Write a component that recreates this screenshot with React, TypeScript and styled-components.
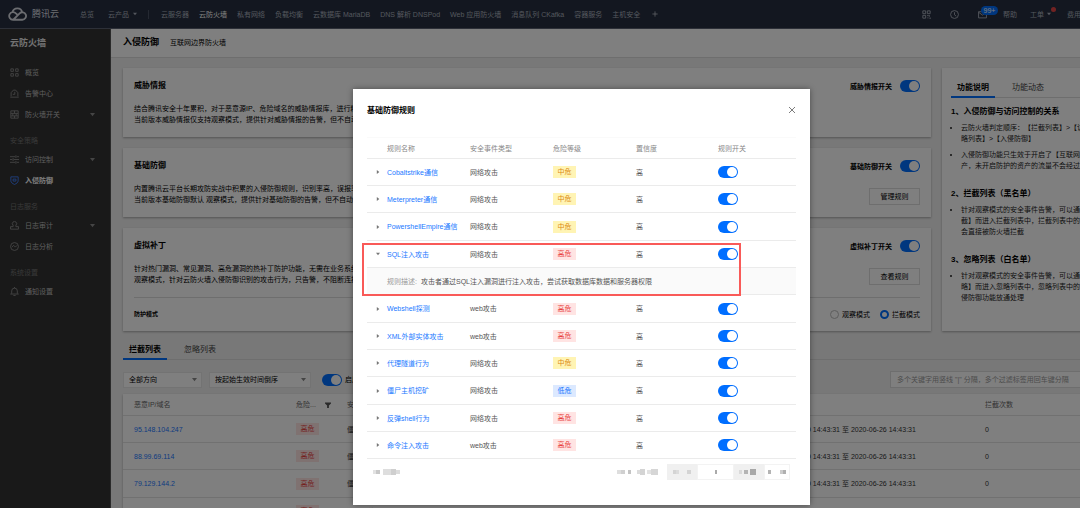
import React from "react";
import styled, { createGlobalStyle, css } from "styled-components";

const Global = createGlobalStyle`
  *, *::before, *::after { box-sizing: border-box; }
  html, body { margin: 0; height: 100%; overflow: hidden; }
  body {
    font-family: "Liberation Sans", "Noto Sans CJK SC", sans-serif;
    font-size: 7px;
    line-height: 11px;
    text-spacing-trim: space-all;
    color: #000;
    background: #f0f0f0;
  }
  button, input, select { font: inherit; color: inherit; margin: 0; padding: 0; }
  h1, h2, h3, p, ul { margin: 0; padding: 0; font-weight: normal; }
  a { color: inherit; text-decoration: none; }
  svg { display: block; flex: none; }
`;

const Viewport = styled.div`
  height: 100vh;
  overflow: hidden;
`;

const Page = styled.div`
  position: relative;
  min-width: 1163px;
  min-height: 100vh;
  display: flex;
  flex-direction: column;
`;

/* ---------- top bar ---------- */

const TopBar = styled.header`
  display: flex;
  align-items: center;
  height: 29px;
  padding-left: 8px;
  background: #262f40;
  border-bottom: 1px solid #5b6070;
  color: #a9afbc;
  white-space: nowrap;
`;

const Brand = styled.a`
  display: flex;
  align-items: center;
  gap: 5px;
  width: 72px;
  font-size: 9px;
  color: #d8dbe2;
`;

const TopNav = styled.nav`
  display: flex;
  align-items: center;
  gap: 10px;
`;

const TopLink = styled.a<{ $active?: boolean }>`
  display: flex;
  align-items: center;
  gap: 4px;
  color: ${(p) => (p.$active ? "#fff" : "inherit")};
`;

const Entry = styled.div`
  display: flex;
  align-items: center;
  gap: 14px;
  width: 68px;
`;

const Divider = styled.span`
  width: 1px;
  height: 9px;
  margin-right: 12px;
  background: #4b5364;
`;

const AddButton = styled.button`
  border: 0;
  background: none;
  margin-left: 2px;
  color: #c0c4cd;
`;

const Tools = styled.div`
  display: flex;
  align-items: center;
  width: 241px;
  margin-left: auto;
`;

const Tool = styled.a<{ $w: number }>`
  position: relative;
  display: flex;
  align-items: center;
  gap: 3px;
  width: ${(p) => p.$w}px;
`;

const Count = styled.span`
  position: absolute;
  left: 3px;
  top: -4px;
  width: 17px;
  border-radius: 5px;
  background: #006eff;
  color: #fff;
  line-height: 9px;
  text-align: center;
`;

const Dot = styled.span`
  position: absolute;
  left: 21px;
  top: -2px;
  width: 5px;
  height: 5px;
  border-radius: 50%;
  background: #e54545;
`;

/* ---------- side bar ---------- */

const Body = styled.div`
  flex: 1;
  display: flex;
`;

const Side = styled.aside`
  flex: none;
  width: 111px;
  padding-left: 10px;
  background: #333;
  border-right: 1px solid #555;
  color: #bcbcbc;
`;

const SideTitle = styled.h2`
  margin: 4px 0 9px;
  font-size: 9px;
  line-height: 20px;
  font-weight: bold;
  color: #e4e4e4;
`;

const SideGroup = styled.h3`
  padding-top: 7px;
  line-height: 17px;
  font-size: 7px;
  color: #747474;
`;

const SideItem = styled.a<{ $active?: boolean }>`
  display: flex;
  align-items: center;
  gap: 6px;
  height: 21px;
  padding-right: 15px;
  color: ${(p) => (p.$active ? "#fff" : "inherit")};
  font-weight: ${(p) => (p.$active ? "bold" : "normal")};
  & > svg { color: ${(p) => (p.$active ? "#3d7eff" : "#8a8a8a")}; }
  & > span { flex: 1; }
`;

/* ---------- content ---------- */

const Main = styled.main`
  flex: 1;
  min-width: 0;
`;

const TitleBar = styled.div`
  display: flex;
  align-items: center;
  gap: 11px;
  height: 29px;
  padding: 0 12px 2px;
  background: #fff;
  border-bottom: 1px solid #ddd;
`;

const PageTitle = styled.h1`
  font-size: 9px;
  font-weight: bold;
`;

const Content = styled.div`
  padding: 10px 12px;
`;

const Columns = styled.div`
  display: grid;
  grid-template-columns: 1fr 209px;
  gap: 11px;
`;

const CardStack = styled.div`
  display: flex;
  flex-direction: column;
  gap: 11px;
`;

const panel = css`
  background: #fff;
  box-shadow: 0 1px 2px rgba(0, 0, 0, 0.3);
`;

const Card = styled.section`
  ${panel}
  padding: 12px 11px;
`;

const ModeCard = styled(Card)`
  padding-bottom: 0;
`;

const CardRow = styled.div`
  display: flex;
  justify-content: space-between;
  white-space: nowrap;
`;

const CardTitle = styled.h2`
  margin-bottom: 11px;
  font-size: 8px;
  line-height: 12px;
  font-weight: bold;
`;

const CardActions = styled.div`
  display: flex;
  flex-direction: column;
  align-items: flex-end;
  gap: 16px;
`;

const SwitchLabel = styled.label`
  display: flex;
  align-items: center;
  gap: 8px;
  font-weight: bold;
`;

const Switch = styled.input.attrs({ type: "checkbox" })`
  appearance: none;
  display: flex;
  justify-content: flex-start;
  align-items: center;
  flex: none;
  width: 20px;
  height: 12px;
  padding: 1px;
  border-radius: 6px;
  background: #bbb;
  &::before {
    content: "";
    width: 10px;
    height: 10px;
    border-radius: 50%;
    background: #fff;
  }
  &:checked {
    justify-content: flex-end;
    background: #006eff;
  }
`;

const PlainButton = styled.button`
  width: 51px;
  height: 17px;
  border: 1px solid #ddd;
  background: #fff;
`;

const ModeRow = styled.div`
  display: flex;
  align-items: center;
  justify-content: space-between;
  height: 34px;
  margin-top: 12px;
  border-top: 1px solid #ddd;
`;

const ModeLabel = styled.strong`
  font-size: 6px;
`;

const RadioGroup = styled.div`
  display: flex;
  gap: 10px;
`;

const RadioLabel = styled.label`
  display: flex;
  align-items: center;
  gap: 3px;
`;

const Radio = styled.input.attrs({ type: "radio" })`
  appearance: none;
  width: 9px;
  height: 9px;
  border: 1px solid #bbb;
  border-radius: 50%;
  background: #fff;
  &:checked { border: 2px solid #006eff; }
`;

const Tabs = styled.div`
  display: flex;
  gap: 11px;
  box-shadow: inset 0 -1px #ddd;
`;

const Tab = styled.button<{ $active?: boolean }>`
  padding: 1px 6px 2px;
  border: 0;
  border-bottom: 2px solid ${(p) => (p.$active ? "#006eff" : "transparent")};
  background: none;
  font-size: 8px;
  line-height: 12px;
  font-weight: ${(p) => (p.$active ? "bold" : "normal")};
  color: ${(p) => (p.$active ? "#000" : "#444")};
`;

const Guide = styled.aside`
  ${panel}
  padding: 13px 0 0 9px;
  overflow: hidden;
`;

const GuideTitle = styled.h3`
  margin: 17px 0 4px;
  font-size: 8px;
  line-height: 12px;
  font-weight: bold;
  ${Tabs} + & { margin-top: 8px; }
`;

const GuideList = styled.ul`
  display: flex;
  flex-direction: column;
  gap: 5px;
  padding-left: 10px;
  color: #222;
  white-space: pre;
`;

const ListSection = styled.section`
  margin-top: 12px;
`;

const Filters = styled.div`
  display: flex;
  align-items: center;
  margin: 11px 0 6px;
  white-space: nowrap;
`;

const SelectBox = styled.div<{ $w: number }>`
  display: grid;
  align-items: center;
  width: ${(p) => p.$w}px;
  height: 16px;
  margin-right: 7px;
  background: #fff;
  border: 1px solid #e6e6e6;
  & > * { grid-area: 1 / 1; }
  & > svg { justify-self: end; margin-right: 4px; color: #888; pointer-events: none; }
`;

const Select = styled.select`
  appearance: none;
  width: 100%;
  height: 14px;
  padding-left: 5px;
  border: 0;
  background: none;
`;

const FilterSwitch = styled.label`
  display: flex;
  align-items: center;
  gap: 3px;
  margin-left: 4px;
`;

const Search = styled.input`
  width: 261px;
  height: 17px;
  margin-left: auto;
  padding-left: 6px;
  border: 1px solid #ddd;
  background: #fff;
  &::placeholder { color: #999; opacity: 1; }
`;

const tableBase = css`
  width: 100%;
  border-collapse: separate;
  border-spacing: 0;
  table-layout: fixed;
  white-space: nowrap;
  & th, & td { padding: 0; text-align: left; vertical-align: middle; }
  & th { font-weight: normal; color: #888; }
  & tbody tr { height: 27px; }
  & tbody tr:nth-child(3n) { height: 28px; }
`;

const HitTable = styled.table`
  ${tableBase}
  ${panel}
  & th, & td { padding-left: 11px; border-bottom: 1px solid #e2e2e2; }
  & thead tr { height: 22px; }
  & th { color: #666; }
  & td { color: #333; }
`;

const HeadCell = styled.span`
  display: flex;
  align-items: center;
  gap: 9px;
`;

const Link = styled.a`
  color: #1a78ff;
`;

const tones = {
  high: ["#ffe4e3", "#e8403c"],
  mid: ["#fff4b4", "#dd8a10"],
  low: ["#dce9ff", "#1473ff"],
};

const Tag = styled.span<{ $tone: keyof typeof tones }>`
  display: block;
  width: 23px;
  line-height: 12px;
  text-align: center;
  background: ${(p) => tones[p.$tone][0]};
  color: ${(p) => tones[p.$tone][1]};
`;

/* ---------- dialog ---------- */

const Mask = styled.div`
  position: absolute;
  inset: 0;
  display: flex;
  justify-content: center;
  align-items: flex-start;
  padding-top: 89px;
  background: rgba(0, 0, 0, 0.5);
`;

const Dialog = styled.section`
  width: 457px;
  padding: 15px 14px 25px;
  background: #fff;
  box-shadow: 0 0 6px rgba(0, 0, 0, 0.4);
`;

const DialogHead = styled.div`
  display: flex;
  align-items: center;
  justify-content: space-between;
  height: 12px;
  margin-bottom: 21px;
`;

const DialogTitle = styled.h2`
  font-size: 8px;
  font-weight: bold;
`;

const CloseButton = styled.button`
  border: 0;
  background: none;
  color: #777;
`;

const RuleArea = styled.div`
  position: relative;
`;

const RuleTable = styled.table`
  ${tableBase}
  & th, & td { border-bottom: 1px solid #ebebeb; color: #555; }
  & thead tr { height: 22px; }
  & th { border-top: 1px solid #fafafa; color: #888; }
`;

const Expander = styled.button`
  display: block;
  margin-left: 9px;
  border: 0;
  background: none;
  color: #777;
`;

const DetailCell = styled.td`
  background: #fafafa;
`;

const DetailKey = styled.span`
  display: inline-block;
  width: 34px;
  color: #999;
`;

const Highlight = styled.div`
  position: absolute;
  left: -5px;
  top: 106px;
  width: 379px;
  height: 53px;
  border: 2px solid #f95a58;
  pointer-events: none;
`;

const Pager = styled.div`
  display: flex;
  align-items: center;
  height: 16px;
  margin: 5px 6px 0;
`;

const PagerInfo = styled.span`
  margin-left: auto;
  margin-right: 8px;
`;

const PagerButton = styled.button<{ $shade?: boolean; $w: number }>`
  display: flex;
  align-items: center;
  justify-content: center;
  width: ${(p) => p.$w}px;
  height: 16px;
  border: 1px solid ${(p) => (p.$shade ? "#f0f0f0" : "#f3f3f3")};
  background: ${(p) => (p.$shade ? "#f0f0f0" : "#fff")};
`;

/* ---------- drawings ---------- */

const Caret = ({ dir = "down", size = 5 }: { dir?: "down" | "right"; size?: number }) => (
  <svg width={size} height={size} viewBox="0 0 6 6" fill="currentColor" aria-hidden>
    <path d={dir === "down" ? "M0 1.2h6L3 5z" : "M1.2 0v6L5 3z"} />
  </svg>
);

const Glyph = ({ d, size = 9, w = 1 }: { d: string; size?: number; w?: number }) => (
  <svg width={size} height={size} viewBox="0 0 16 16" fill="none" stroke="currentColor" strokeWidth={w * 1.6} aria-hidden>
    <path d={d} />
  </svg>
);

const icons = {
  overview: "M1.5 1.5h4.500v4.500H1.500zM10 1.500h4.500v4.500H10zM1.500 10h4.500v4.500H1.500zM10 10h4.500v4.500H10z",
  alarm: "M2 13V6.500L6 2h4l4 4.500V13M0.500 14.500h15M8.500 5v4.500H5",
  wall: "M1.500 1.500h13v13h-13zM1.500 6h13M1.500 10.500h13M8 1.500V6M5 6v4.500M11 6v4.500M8 10.500v4",
  access: "M0 3h9M12 3h4M10.500 0.500v5M0 8h4M7 8h9M5.500 5.500v5M0 13h9M12 13h4M10.500 10.500v5",
  shield: "M1.500 1.500h13v7c0 3-3 5-6.500 6.500C4.500 13.500 1.500 11.500 1.500 8.500zM5.500 5.500h5v3.500h-5z",
  audit: "M5.500 7.500a3.800 3.800 0 1 1 5 0v2.500h4.500v4.500H1V10h4.500z",
  analyse: "M8 1a7 7 0 1 1 0 14A7 7 0 0 1 8 1zM3.500 9l3-3 3 3 3-3",
  bell: "M3 12V7a5 5 0 0 1 10 0v5M0.500 12.500h15M6 15h4M8 0v2",
  clock: "M8 1a7 7 0 1 1 0 14A7 7 0 0 1 8 1zM8 4v4.500l3 2.500",
  mail: "M1 3h14v11H1zM1 4l7 5 7-5",
  qr: "M1.500 1.500h5v5h-5zM9.500 1.500h5v5h-5zM1.500 9.500h5v5h-5zM9 10h3M13 9v3M9.500 14h2M13 14.500h3",
  close: "M2 2l12 12M14 2L2 14",
  plus: "M8 1v14M1 8h14",
};

const CloudLogo = () => (
  <svg width="19" height="14" viewBox="0 0 38 28" fill="none" stroke="currentColor" strokeWidth="3.600" aria-hidden>
    <path d="M10 25.500h18.500a7.500 7.500 0 1 0-5.200-12.800L10.500 25.500M10 25.500a7.700 7.700 0 1 1 5.800-12.900l4 3.700M9 10.500a10 10 0 0 1 19.500 0.300" />
  </svg>
);

/* Redacted text: [x, width, grey] blocks. */
const Redacted = ({ blocks, width }: { blocks: [number, number, string][]; width: number }) => (
  <svg width={width} height="8" aria-hidden>
    {blocks.map(([x, w, c]) => (
      <rect key={x} x={x} y={w > 4 ? 1 : 2} width={w} height={w > 4 ? 6 : 4} fill={c} />
    ))}
  </svg>
);

/* ---------- data ---------- */

const services = [
  "云服务器", "云防火墙", "私有网络", "负载均衡", "云数据库 MariaDB", "DNS 解析 DNSPod",
  "Web 应用防火墙", "消息队列 CKafka", "容器服务", "主机安全",
];

type MenuEntry = { text: string; icon?: keyof typeof icons; more?: boolean; active?: boolean };

const menu: MenuEntry[] = [
  { text: "概览", icon: "overview" },
  { text: "告警中心", icon: "alarm" },
  { text: "防火墙开关", icon: "wall", more: true },
  { text: "安全策略" },
  { text: "访问控制", icon: "access", more: true },
  { text: "入侵防御", icon: "shield", active: true },
  { text: "日志服务" },
  { text: "日志审计", icon: "audit", more: true },
  { text: "日志分析", icon: "analyse" },
  { text: "系统设置" },
  { text: "通知设置", icon: "bell" },
];

const guide = [
  {
    title: "1、入侵防御与访问控制的关系",
    items: [
      "云防火墙判定顺序：【拦截列表】>【访问控制】>【忽\n略列表】>【入侵防御】",
      "入侵防御功能只生效于开启了【互联网边界开关】的资\n产，未开启防护的资产的流量不会经过防火墙",
    ],
  },
  {
    title: "2、拦截列表（黑名单）",
    items: ["针对观察模式的安全事件告警，可以通过点击【一键拦\n截】而进入拦截列表中，拦截列表中的IP或域名，均\n会直接被防火墙拦截"],
  },
  {
    title: "3、忽略列表（白名单）",
    items: ["针对观察模式的安全事件告警，可以通过点击【一键忽\n略】而进入忽略列表中，忽略列表中的IP将会被入\n侵防御功能放通处理"],
  },
];

const hits = ["95.148.104.247", "88.99.69.114", "79.129.144.2", "45.143.220.55"];

const levelText = { high: "高危", mid: "中危", low: "低危" };

type Rule = { name: string; kind: string; level: keyof typeof tones; detail?: string };

const rules: Rule[] = [
  { name: "Cobaltstrike通信", kind: "网络攻击", level: "mid" },
  { name: "Meterpreter通信", kind: "网络攻击", level: "mid" },
  { name: "PowershellEmpire通信", kind: "网络攻击", level: "mid" },
  {
    name: "SQL注入攻击", kind: "网络攻击", level: "high",
    detail: "攻击者通过SQL注入漏洞进行注入攻击，尝试获取数据库数据和服务器权限",
  },
  { name: "Webshell探测", kind: "web攻击", level: "high" },
  { name: "XML外部实体攻击", kind: "web攻击", level: "high" },
  { name: "代理隧道行为", kind: "网络攻击", level: "mid" },
  { name: "僵尸主机挖矿", kind: "网络攻击", level: "low" },
  { name: "反弹shell行为", kind: "网络攻击", level: "high" },
  { name: "命令注入攻击", kind: "web攻击", level: "high" },
];

const Header = () => (
  <TopBar>
    <Brand href="#"><CloudLogo />腾讯云</Brand>
    <Entry>
      <TopLink href="#">总览</TopLink>
      <TopLink href="#">云产品 <Caret size={4} /></TopLink>
    </Entry>
    <Divider />
    <TopNav>
      {services.map((s) => <TopLink key={s} href="#" $active={s === "云防火墙"}>{s}</TopLink>)}
      <AddButton aria-label="添加"><Glyph d={icons.plus} size={6} w={1.3} /></AddButton>
    </TopNav>
    <Tools>
      <Tool href="#" $w={28} aria-label="小程序"><Glyph d={icons.qr} /></Tool>
      <Tool href="#" $w={28} aria-label="最近访问"><Glyph d={icons.clock} /></Tool>
      <Tool href="#" $w={25} aria-label="消息"><Glyph d={icons.mail} /><Count>99+</Count></Tool>
      <Tool href="#" $w={27}>帮助</Tool>
      <Tool href="#" $w={37}>工单<Caret size={4} /><Dot /></Tool>
      <Tool href="#" $w={37}>费用<Caret size={4} /></Tool>
    </Tools>
  </TopBar>
);

const Sidebar = () => (
  <Side>
    <SideTitle>云防火墙</SideTitle>
    {menu.map((m) =>
      m.icon ? (
        <SideItem key={m.text} href="#" $active={m.active}>
          <Glyph d={icons[m.icon]} />
          <span>{m.text}</span>
          {m.more && <Caret />}
        </SideItem>
      ) : (
        <SideGroup key={m.text}>{m.text}</SideGroup>
      )
    )}
  </Side>
);

const LabeledSwitch = ({ text }: { text: string }) => (
  <SwitchLabel>{text}<Switch defaultChecked /></SwitchLabel>
);

const Cards = () => (
  <CardStack>
    <Card>
      <CardRow>
        <div>
          <CardTitle>威胁情报</CardTitle>
          <p>结合腾讯安全十年累积，对于恶意源IP、危险域名的威胁情报库，进行精</p>
          <p>当前版本威胁情报仅支持观察模式，提供针对威胁情报的告警，但不自动</p>
        </div>
        <CardActions><LabeledSwitch text="威胁情报开关" /></CardActions>
      </CardRow>
    </Card>
    <Card>
      <CardRow>
        <div>
          <CardTitle>基础防御</CardTitle>
          <p>内置腾讯云平台长期攻防实战中积累的入侵防御规则，识别率高，误报率</p>
          <p>当前版本基础防御默认 观察模式，提供针对基础防御的告警，但不自动阻</p>
        </div>
        <CardActions>
          <LabeledSwitch text="基础防御开关" />
          <PlainButton>管理规则</PlainButton>
        </CardActions>
      </CardRow>
    </Card>
    <ModeCard>
      <CardRow>
        <div>
          <CardTitle>虚拟补丁</CardTitle>
          <p>针对热门漏洞、常见漏洞、高危漏洞的热补丁防护功能，无需在业务系统</p>
          <p>观察模式，针对云防火墙入侵防御识别的攻击行为，只告警，不阻断连接</p>
        </div>
        <CardActions>
          <LabeledSwitch text="虚拟补丁开关" />
          <PlainButton>查看规则</PlainButton>
        </CardActions>
      </CardRow>
      <ModeRow>
        <ModeLabel>防护模式</ModeLabel>
        <RadioGroup>
          <RadioLabel><Radio name="mode" />观察模式</RadioLabel>
          <RadioLabel><Radio name="mode" defaultChecked />拦截模式</RadioLabel>
        </RadioGroup>
      </ModeRow>
    </ModeCard>
  </CardStack>
);

const HitList = () => (
  <ListSection>
    <Tabs><Tab $active>拦截列表</Tab><Tab>忽略列表</Tab></Tabs>
    <Filters>
      <SelectBox $w={79}>
        <Select aria-label="方向"><option>全部方向</option></Select><Caret />
      </SelectBox>
      <SelectBox $w={102}>
        <Select aria-label="排序"><option>按起始生效时间倒序</option></Select><Caret />
      </SelectBox>
      <FilterSwitch><Switch defaultChecked />启用</FilterSwitch>
      <Search aria-label="搜索" placeholder={'多个关键字用竖线 "|" 分隔，多个过滤标签用回车键分隔'} />
    </Filters>
    <HitTable>
      <colgroup>
        <col style={{ width: 162 }} /><col style={{ width: 51 }} /><col style={{ width: 428 }} />
        <col style={{ width: 210 }} /><col />
      </colgroup>
      <thead>
        <tr>
          <th>恶意IP/域名</th>
          <th>
            <HeadCell>
              危险...
              <svg width="6" height="6" viewBox="0 0 6 6" fill="#555"><path d="M0 .5h6v1L3.900 3.400V6H2.100V3.400L0 1.500z" /></svg>
            </HeadCell>
          </th>
          <th>安全事件类型</th>
          <th>生效时间</th>
          <th>拦截次数</th>
        </tr>
      </thead>
      <tbody>
        {hits.map((ip) => (
          <tr key={ip}>
            <td><Link href="#">{ip}</Link></td>
            <td><Tag $tone="high">高危</Tag></td>
            <td>僵尸网络</td>
            <td>2020-06-19 14:43:31 至 2020-06-26 14:43:31</td>
            <td>0</td>
          </tr>
        ))}
      </tbody>
    </HitTable>
  </ListSection>
);

const RuleDialog = () => (
  <Mask>
    <Dialog role="dialog" aria-label="基础防御规则">
      <DialogHead>
        <DialogTitle>基础防御规则</DialogTitle>
        <CloseButton aria-label="关闭"><Glyph d={icons.close} size={8} w={1.2} /></CloseButton>
      </DialogHead>
      <RuleArea>
        <RuleTable>
          <colgroup>
            <col style={{ width: 20 }} /><col style={{ width: 83 }} /><col style={{ width: 83 }} />
            <col style={{ width: 83 }} /><col style={{ width: 82 }} /><col />
          </colgroup>
          <thead>
            <tr>
              <th /><th>规则名称</th><th>安全事件类型</th><th>危险等级</th><th>置信度</th><th>规则开关</th>
            </tr>
          </thead>
          <tbody>
            {rules.map((r) => (
              <React.Fragment key={r.name}>
                <tr>
                  <td>
                    <Expander aria-label={"展开" + r.name}>
                      <Caret dir={r.detail ? "down" : "right"} size={4} />
                    </Expander>
                  </td>
                  <td><Link href="#">{r.name}</Link></td>
                  <td>{r.kind}</td>
                  <td><Tag $tone={r.level}>{levelText[r.level]}</Tag></td>
                  <td>高</td>
                  <td><Switch defaultChecked aria-label={r.name} /></td>
                </tr>
                {r.detail && (
                  <tr>
                    <DetailCell />
                    <DetailCell colSpan={5}><DetailKey>规则描述:</DetailKey>{r.detail}</DetailCell>
                  </tr>
                )}
              </React.Fragment>
            ))}
          </tbody>
        </RuleTable>
        <Highlight />
      </RuleArea>
      <Pager>
        <Redacted width={28} blocks={[[0, 3, "#e2e2e2"], [3, 4, "#c8c8c8"], [10, 8, "#dedede"], [18, 5, "#cfcfcf"], [23, 4, "#dcdcdc"]]} />
        <PagerInfo>
          <Redacted width={43} blocks={[[1, 4, "#dedede"], [5, 4, "#d0d0d0"], [12, 3, "#c4c4c4"], [21, 3, "#dcdcdc"], [24, 5, "#d4d4d4"], [31, 4, "#e2e2e2"], [35, 7, "#d6d6d6"]]} />
        </PagerInfo>
        <PagerButton $shade $w={30} aria-label="上一页">
          <Redacted width={20} blocks={[[1, 3, "#d4d4d4"], [4, 3, "#dcdcdc"], [15, 4, "#d4d4d4"]]} />
        </PagerButton>
        <PagerButton $w={37} aria-label="当前页">
          <Redacted width={4} blocks={[[1, 2, "#aaa"]]} />
        </PagerButton>
        <PagerButton $shade $w={30} aria-label="总页数">
          <Redacted width={20} blocks={[[0, 3, "#dadada"], [5, 4, "#b4b4b4"], [11, 6, "#a8a8a8"]]} />
        </PagerButton>
        <PagerButton $w={26} aria-label="下一页">
          <Redacted width={20} blocks={[[1, 3, "#b4b4b4"], [13, 3, "#ccc"], [16, 3, "#b0b0b0"]]} />
        </PagerButton>
      </Pager>
    </Dialog>
  </Mask>
);

export default function App() {
  return (
    <Viewport>
      <Global />
      <Page>
        <Header />
        <Body>
          <Sidebar />
          <Main>
            <TitleBar><PageTitle>入侵防御</PageTitle><span>互联网边界防火墙</span></TitleBar>
            <Content>
              <Columns>
                <Cards />
                <Guide>
                  <Tabs><Tab $active>功能说明</Tab><Tab>功能动态</Tab></Tabs>
                  {guide.map((g) => (
                    <React.Fragment key={g.title}>
                      <GuideTitle>{g.title}</GuideTitle>
                      <GuideList>{g.items.map((t) => <li key={t}>{t}</li>)}</GuideList>
                    </React.Fragment>
                  ))}
                </Guide>
              </Columns>
              <HitList />
            </Content>
          </Main>
        </Body>
        <RuleDialog />
      </Page>
    </Viewport>
  );
}
